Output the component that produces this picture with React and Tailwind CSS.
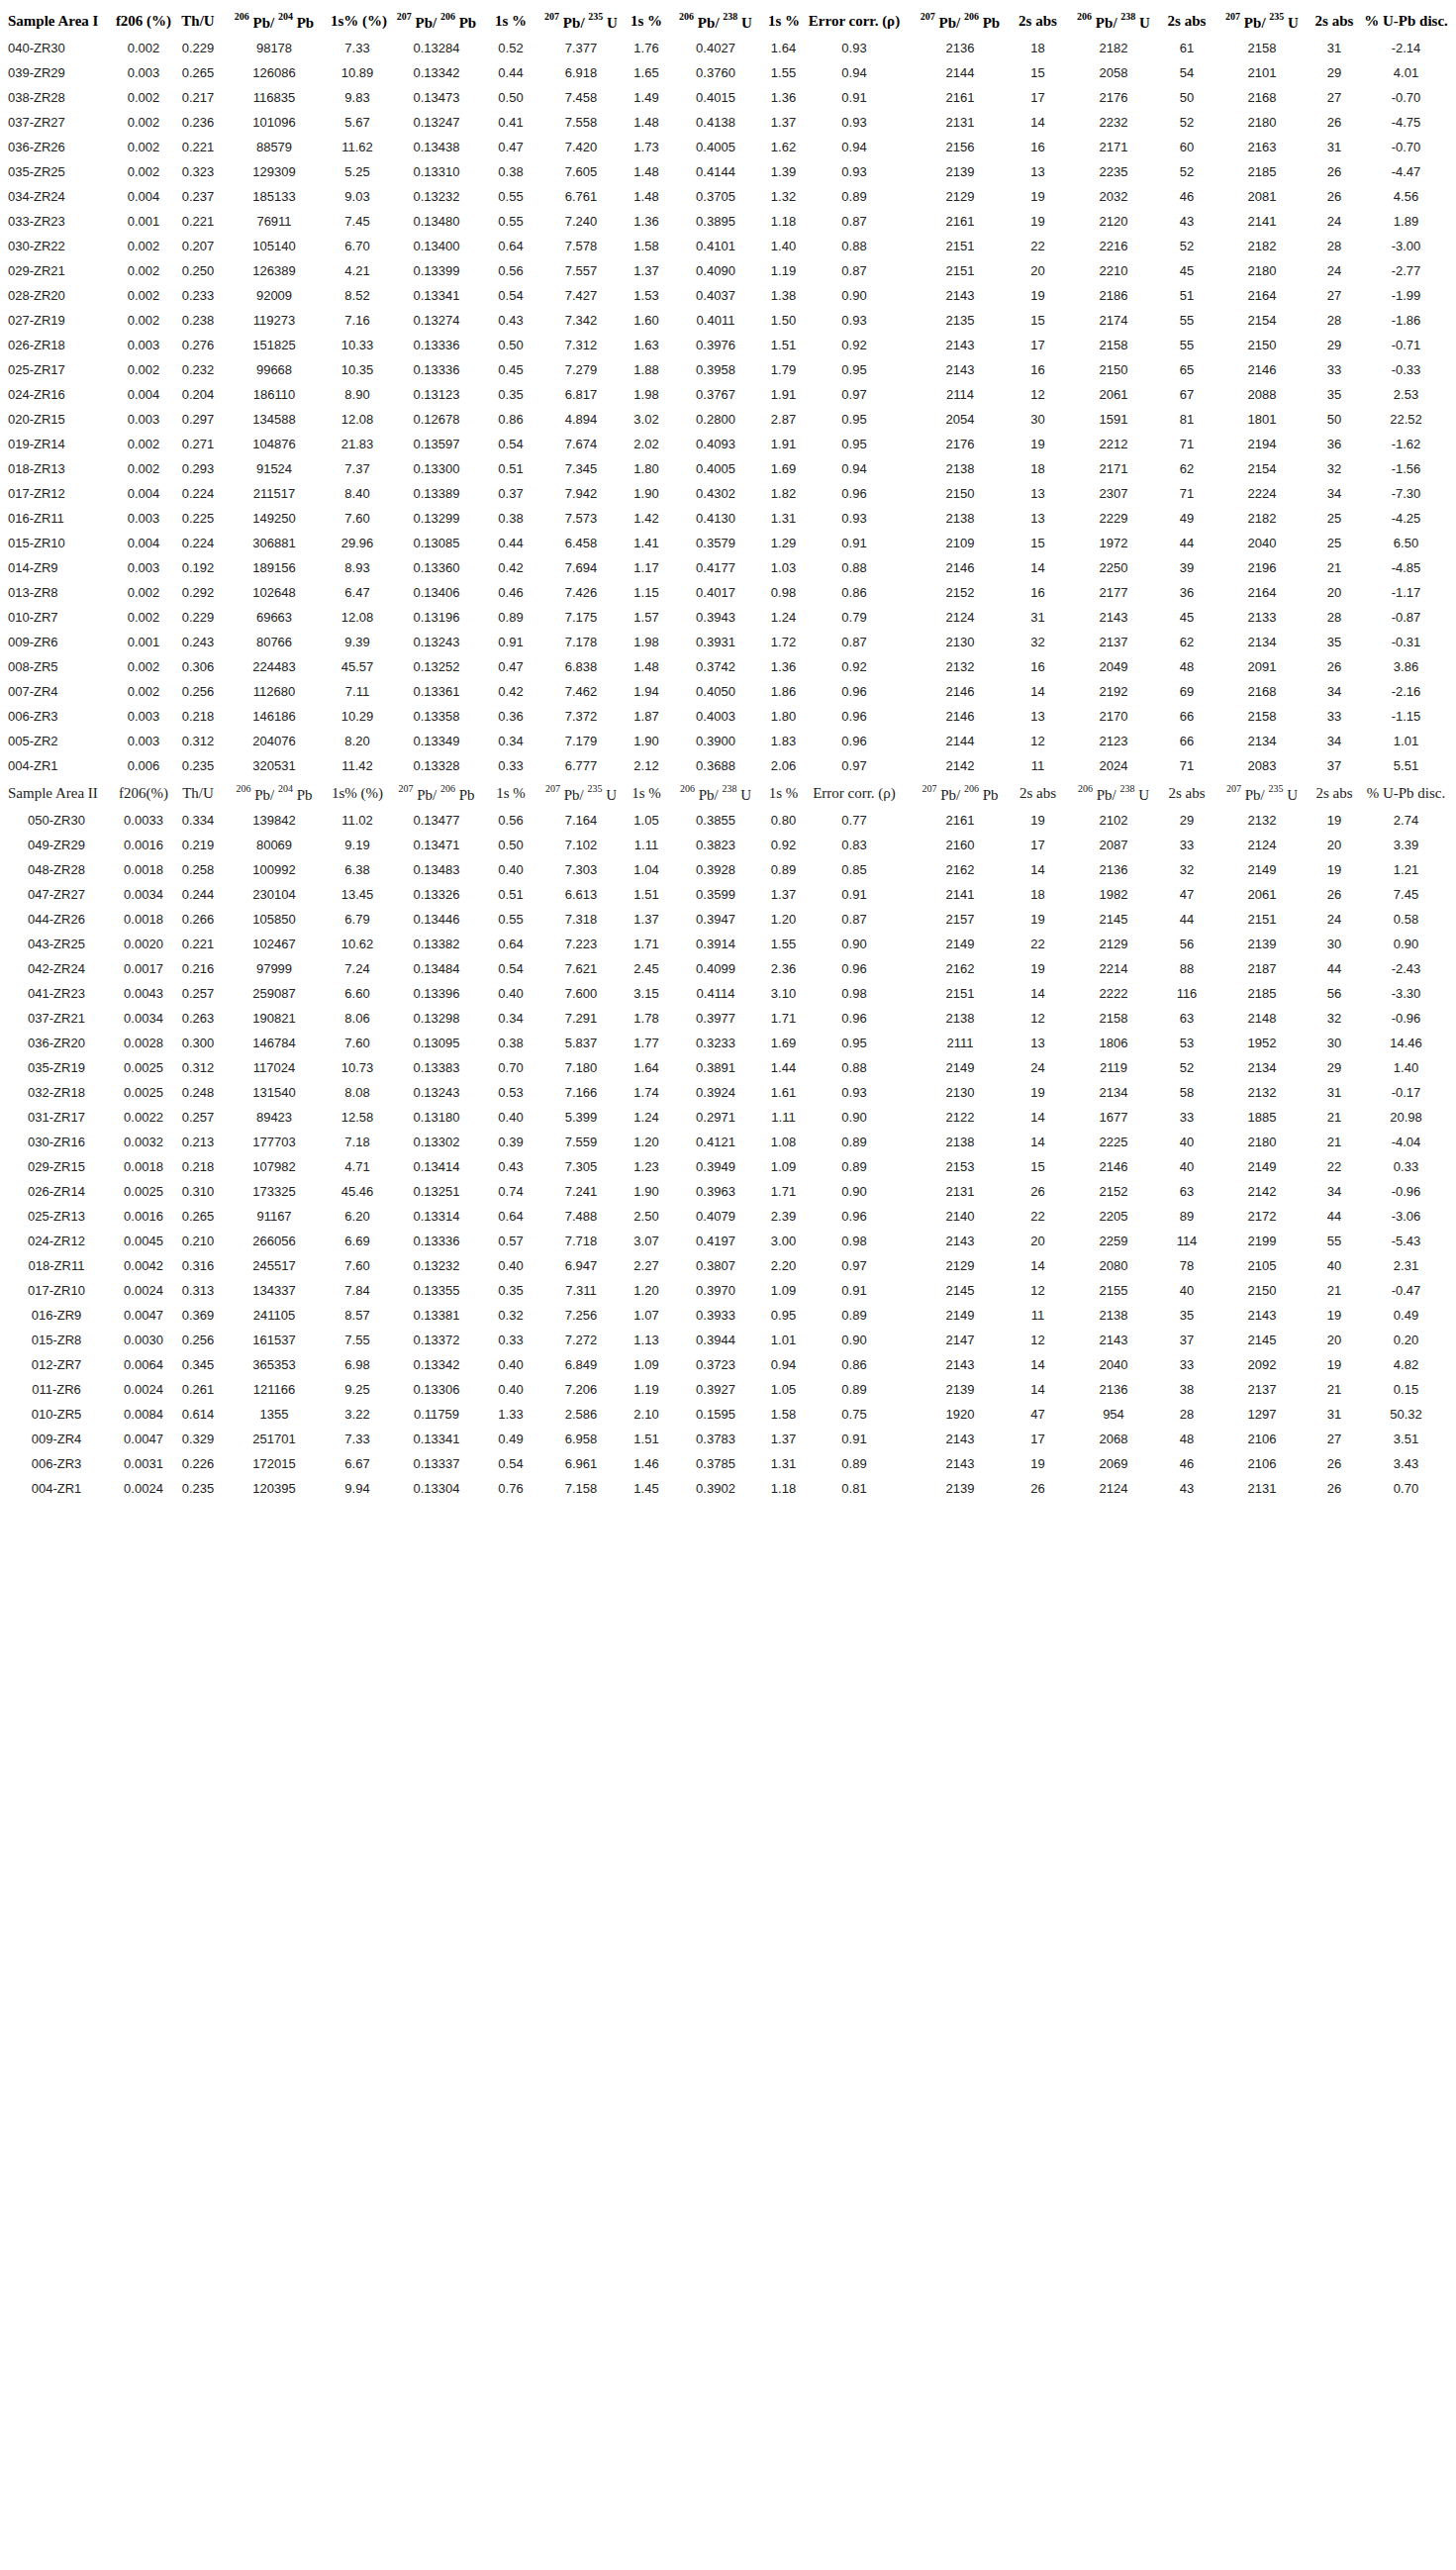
const areaOne = [
  ["040-ZR30", "0.002", "0.229", "98178", "7.33", "0.13284", "0.52", "7.377", "1.76", "0.4027", "1.64", "0.93", "2136", "18", "2182", "61", "2158", "31", "-2.14"],
  ["039-ZR29", "0.003", "0.265", "126086", "10.89", "0.13342", "0.44", "6.918", "1.65", "0.3760", "1.55", "0.94", "2144", "15", "2058", "54", "2101", "29", "4.01"],
  ["038-ZR28", "0.002", "0.217", "116835", "9.83", "0.13473", "0.50", "7.458", "1.49", "0.4015", "1.36", "0.91", "2161", "17", "2176", "50", "2168", "27", "-0.70"],
  ["037-ZR27", "0.002", "0.236", "101096", "5.67", "0.13247", "0.41", "7.558", "1.48", "0.4138", "1.37", "0.93", "2131", "14", "2232", "52", "2180", "26", "-4.75"],
  ["036-ZR26", "0.002", "0.221", "88579", "11.62", "0.13438", "0.47", "7.420", "1.73", "0.4005", "1.62", "0.94", "2156", "16", "2171", "60", "2163", "31", "-0.70"],
  ["035-ZR25", "0.002", "0.323", "129309", "5.25", "0.13310", "0.38", "7.605", "1.48", "0.4144", "1.39", "0.93", "2139", "13", "2235", "52", "2185", "26", "-4.47"],
  ["034-ZR24", "0.004", "0.237", "185133", "9.03", "0.13232", "0.55", "6.761", "1.48", "0.3705", "1.32", "0.89", "2129", "19", "2032", "46", "2081", "26", "4.56"],
  ["033-ZR23", "0.001", "0.221", "76911", "7.45", "0.13480", "0.55", "7.240", "1.36", "0.3895", "1.18", "0.87", "2161", "19", "2120", "43", "2141", "24", "1.89"],
  ["030-ZR22", "0.002", "0.207", "105140", "6.70", "0.13400", "0.64", "7.578", "1.58", "0.4101", "1.40", "0.88", "2151", "22", "2216", "52", "2182", "28", "-3.00"],
  ["029-ZR21", "0.002", "0.250", "126389", "4.21", "0.13399", "0.56", "7.557", "1.37", "0.4090", "1.19", "0.87", "2151", "20", "2210", "45", "2180", "24", "-2.77"],
  ["028-ZR20", "0.002", "0.233", "92009", "8.52", "0.13341", "0.54", "7.427", "1.53", "0.4037", "1.38", "0.90", "2143", "19", "2186", "51", "2164", "27", "-1.99"],
  ["027-ZR19", "0.002", "0.238", "119273", "7.16", "0.13274", "0.43", "7.342", "1.60", "0.4011", "1.50", "0.93", "2135", "15", "2174", "55", "2154", "28", "-1.86"],
  ["026-ZR18", "0.003", "0.276", "151825", "10.33", "0.13336", "0.50", "7.312", "1.63", "0.3976", "1.51", "0.92", "2143", "17", "2158", "55", "2150", "29", "-0.71"],
  ["025-ZR17", "0.002", "0.232", "99668", "10.35", "0.13336", "0.45", "7.279", "1.88", "0.3958", "1.79", "0.95", "2143", "16", "2150", "65", "2146", "33", "-0.33"],
  ["024-ZR16", "0.004", "0.204", "186110", "8.90", "0.13123", "0.35", "6.817", "1.98", "0.3767", "1.91", "0.97", "2114", "12", "2061", "67", "2088", "35", "2.53"],
  ["020-ZR15", "0.003", "0.297", "134588", "12.08", "0.12678", "0.86", "4.894", "3.02", "0.2800", "2.87", "0.95", "2054", "30", "1591", "81", "1801", "50", "22.52"],
  ["019-ZR14", "0.002", "0.271", "104876", "21.83", "0.13597", "0.54", "7.674", "2.02", "0.4093", "1.91", "0.95", "2176", "19", "2212", "71", "2194", "36", "-1.62"],
  ["018-ZR13", "0.002", "0.293", "91524", "7.37", "0.13300", "0.51", "7.345", "1.80", "0.4005", "1.69", "0.94", "2138", "18", "2171", "62", "2154", "32", "-1.56"],
  ["017-ZR12", "0.004", "0.224", "211517", "8.40", "0.13389", "0.37", "7.942", "1.90", "0.4302", "1.82", "0.96", "2150", "13", "2307", "71", "2224", "34", "-7.30"],
  ["016-ZR11", "0.003", "0.225", "149250", "7.60", "0.13299", "0.38", "7.573", "1.42", "0.4130", "1.31", "0.93", "2138", "13", "2229", "49", "2182", "25", "-4.25"],
  ["015-ZR10", "0.004", "0.224", "306881", "29.96", "0.13085", "0.44", "6.458", "1.41", "0.3579", "1.29", "0.91", "2109", "15", "1972", "44", "2040", "25", "6.50"],
  ["014-ZR9", "0.003", "0.192", "189156", "8.93", "0.13360", "0.42", "7.694", "1.17", "0.4177", "1.03", "0.88", "2146", "14", "2250", "39", "2196", "21", "-4.85"],
  ["013-ZR8", "0.002", "0.292", "102648", "6.47", "0.13406", "0.46", "7.426", "1.15", "0.4017", "0.98", "0.86", "2152", "16", "2177", "36", "2164", "20", "-1.17"],
  ["010-ZR7", "0.002", "0.229", "69663", "12.08", "0.13196", "0.89", "7.175", "1.57", "0.3943", "1.24", "0.79", "2124", "31", "2143", "45", "2133", "28", "-0.87"],
  ["009-ZR6", "0.001", "0.243", "80766", "9.39", "0.13243", "0.91", "7.178", "1.98", "0.3931", "1.72", "0.87", "2130", "32", "2137", "62", "2134", "35", "-0.31"],
  ["008-ZR5", "0.002", "0.306", "224483", "45.57", "0.13252", "0.47", "6.838", "1.48", "0.3742", "1.36", "0.92", "2132", "16", "2049", "48", "2091", "26", "3.86"],
  ["007-ZR4", "0.002", "0.256", "112680", "7.11", "0.13361", "0.42", "7.462", "1.94", "0.4050", "1.86", "0.96", "2146", "14", "2192", "69", "2168", "34", "-2.16"],
  ["006-ZR3", "0.003", "0.218", "146186", "10.29", "0.13358", "0.36", "7.372", "1.87", "0.4003", "1.80", "0.96", "2146", "13", "2170", "66", "2158", "33", "-1.15"],
  ["005-ZR2", "0.003", "0.312", "204076", "8.20", "0.13349", "0.34", "7.179", "1.90", "0.3900", "1.83", "0.96", "2144", "12", "2123", "66", "2134", "34", "1.01"],
  ["004-ZR1", "0.006", "0.235", "320531", "11.42", "0.13328", "0.33", "6.777", "2.12", "0.3688", "2.06", "0.97", "2142", "11", "2024", "71", "2083", "37", "5.51"],
];

const areaTwo = [
  ["050-ZR30", "0.0033", "0.334", "139842", "11.02", "0.13477", "0.56", "7.164", "1.05", "0.3855", "0.80", "0.77", "2161", "19", "2102", "29", "2132", "19", "2.74"],
  ["049-ZR29", "0.0016", "0.219", "80069", "9.19", "0.13471", "0.50", "7.102", "1.11", "0.3823", "0.92", "0.83", "2160", "17", "2087", "33", "2124", "20", "3.39"],
  ["048-ZR28", "0.0018", "0.258", "100992", "6.38", "0.13483", "0.40", "7.303", "1.04", "0.3928", "0.89", "0.85", "2162", "14", "2136", "32", "2149", "19", "1.21"],
  ["047-ZR27", "0.0034", "0.244", "230104", "13.45", "0.13326", "0.51", "6.613", "1.51", "0.3599", "1.37", "0.91", "2141", "18", "1982", "47", "2061", "26", "7.45"],
  ["044-ZR26", "0.0018", "0.266", "105850", "6.79", "0.13446", "0.55", "7.318", "1.37", "0.3947", "1.20", "0.87", "2157", "19", "2145", "44", "2151", "24", "0.58"],
  ["043-ZR25", "0.0020", "0.221", "102467", "10.62", "0.13382", "0.64", "7.223", "1.71", "0.3914", "1.55", "0.90", "2149", "22", "2129", "56", "2139", "30", "0.90"],
  ["042-ZR24", "0.0017", "0.216", "97999", "7.24", "0.13484", "0.54", "7.621", "2.45", "0.4099", "2.36", "0.96", "2162", "19", "2214", "88", "2187", "44", "-2.43"],
  ["041-ZR23", "0.0043", "0.257", "259087", "6.60", "0.13396", "0.40", "7.600", "3.15", "0.4114", "3.10", "0.98", "2151", "14", "2222", "116", "2185", "56", "-3.30"],
  ["037-ZR21", "0.0034", "0.263", "190821", "8.06", "0.13298", "0.34", "7.291", "1.78", "0.3977", "1.71", "0.96", "2138", "12", "2158", "63", "2148", "32", "-0.96"],
  ["036-ZR20", "0.0028", "0.300", "146784", "7.60", "0.13095", "0.38", "5.837", "1.77", "0.3233", "1.69", "0.95", "2111", "13", "1806", "53", "1952", "30", "14.46"],
  ["035-ZR19", "0.0025", "0.312", "117024", "10.73", "0.13383", "0.70", "7.180", "1.64", "0.3891", "1.44", "0.88", "2149", "24", "2119", "52", "2134", "29", "1.40"],
  ["032-ZR18", "0.0025", "0.248", "131540", "8.08", "0.13243", "0.53", "7.166", "1.74", "0.3924", "1.61", "0.93", "2130", "19", "2134", "58", "2132", "31", "-0.17"],
  ["031-ZR17", "0.0022", "0.257", "89423", "12.58", "0.13180", "0.40", "5.399", "1.24", "0.2971", "1.11", "0.90", "2122", "14", "1677", "33", "1885", "21", "20.98"],
  ["030-ZR16", "0.0032", "0.213", "177703", "7.18", "0.13302", "0.39", "7.559", "1.20", "0.4121", "1.08", "0.89", "2138", "14", "2225", "40", "2180", "21", "-4.04"],
  ["029-ZR15", "0.0018", "0.218", "107982", "4.71", "0.13414", "0.43", "7.305", "1.23", "0.3949", "1.09", "0.89", "2153", "15", "2146", "40", "2149", "22", "0.33"],
  ["026-ZR14", "0.0025", "0.310", "173325", "45.46", "0.13251", "0.74", "7.241", "1.90", "0.3963", "1.71", "0.90", "2131", "26", "2152", "63", "2142", "34", "-0.96"],
  ["025-ZR13", "0.0016", "0.265", "91167", "6.20", "0.13314", "0.64", "7.488", "2.50", "0.4079", "2.39", "0.96", "2140", "22", "2205", "89", "2172", "44", "-3.06"],
  ["024-ZR12", "0.0045", "0.210", "266056", "6.69", "0.13336", "0.57", "7.718", "3.07", "0.4197", "3.00", "0.98", "2143", "20", "2259", "114", "2199", "55", "-5.43"],
  ["018-ZR11", "0.0042", "0.316", "245517", "7.60", "0.13232", "0.40", "6.947", "2.27", "0.3807", "2.20", "0.97", "2129", "14", "2080", "78", "2105", "40", "2.31"],
  ["017-ZR10", "0.0024", "0.313", "134337", "7.84", "0.13355", "0.35", "7.311", "1.20", "0.3970", "1.09", "0.91", "2145", "12", "2155", "40", "2150", "21", "-0.47"],
  ["016-ZR9", "0.0047", "0.369", "241105", "8.57", "0.13381", "0.32", "7.256", "1.07", "0.3933", "0.95", "0.89", "2149", "11", "2138", "35", "2143", "19", "0.49"],
  ["015-ZR8", "0.0030", "0.256", "161537", "7.55", "0.13372", "0.33", "7.272", "1.13", "0.3944", "1.01", "0.90", "2147", "12", "2143", "37", "2145", "20", "0.20"],
  ["012-ZR7", "0.0064", "0.345", "365353", "6.98", "0.13342", "0.40", "6.849", "1.09", "0.3723", "0.94", "0.86", "2143", "14", "2040", "33", "2092", "19", "4.82"],
  ["011-ZR6", "0.0024", "0.261", "121166", "9.25", "0.13306", "0.40", "7.206", "1.19", "0.3927", "1.05", "0.89", "2139", "14", "2136", "38", "2137", "21", "0.15"],
  ["010-ZR5", "0.0084", "0.614", "1355", "3.22", "0.11759", "1.33", "2.586", "2.10", "0.1595", "1.58", "0.75", "1920", "47", "954", "28", "1297", "31", "50.32"],
  ["009-ZR4", "0.0047", "0.329", "251701", "7.33", "0.13341", "0.49", "6.958", "1.51", "0.3783", "1.37", "0.91", "2143", "17", "2068", "48", "2106", "27", "3.51"],
  ["006-ZR3", "0.0031", "0.226", "172015", "6.67", "0.13337", "0.54", "6.961", "1.46", "0.3785", "1.31", "0.89", "2143", "19", "2069", "46", "2106", "26", "3.43"],
  ["004-ZR1", "0.0024", "0.235", "120395", "9.94", "0.13304", "0.76", "7.158", "1.45", "0.3902", "1.18", "0.81", "2139", "26", "2124", "43", "2131", "26", "0.70"],
];

// 19 fixed columns, matched to the source table
const cols =
  "grid grid-cols-[106px_70px_40px_114px_54px_106px_44px_98px_34px_106px_31px_112px_102px_55px_98px_50px_102px_44px_101px] items-center";

function Ratio({ top, topEl, bottom, bottomEl }) {
  return (
    <span className="whitespace-nowrap">
      <span className="align-[6px] text-[10px]">{top}</span>{" "}
      <span className="align-[-2px]">{topEl}/</span>{" "}
      <span className="align-[6px] text-[10px]">{bottom}</span>{" "}
      <span className="align-[-2px]">{bottomEl}</span>
    </span>
  );
}

function HeaderRow({ area, f206 }) {
  const cells = [
    f206,
    "Th/U",
    <Ratio top="206" topEl="Pb" bottom="204" bottomEl="Pb" />,
    "1s% (%)",
    <Ratio top="207" topEl="Pb" bottom="206" bottomEl="Pb" />,
    "1s %",
    <Ratio top="207" topEl="Pb" bottom="235" bottomEl="U" />,
    "1s %",
    <Ratio top="206" topEl="Pb" bottom="238" bottomEl="U" />,
    "1s %",
    "Error corr. (ρ)",
    <Ratio top="207" topEl="Pb" bottom="206" bottomEl="Pb" />,
    "2s abs",
    <Ratio top="206" topEl="Pb" bottom="238" bottomEl="U" />,
    "2s abs",
    <Ratio top="207" topEl="Pb" bottom="235" bottomEl="U" />,
    "2s abs",
    "% U-Pb disc.",
  ];
  return (
    <div className={`${cols} h-[30px]`}>
      <div className="pl-1 whitespace-nowrap">{area}</div>
      {cells.map((c, i) => (
        <div key={i} className="text-center whitespace-nowrap">
          {c}
        </div>
      ))}
    </div>
  );
}

function DataRow({ row, centerName }) {
  return (
    <div className={`${cols} h-[25px]`}>
      {row.map((v, i) => (
        <div
          key={i}
          className={`whitespace-nowrap ${i === 0 && !centerName ? "pl-1 text-left" : "text-center"}`}
        >
          {v}
        </div>
      ))}
    </div>
  );
}

export default function App() {
  return (
    <div className="min-h-[2596px] bg-white pl-1 pt-[6px] text-black">
      <div className="font-['Liberation_Serif',serif] text-[15px] font-bold leading-none">
        <HeaderRow area="Sample Area I" f206="f206 (%)" />
      </div>
      <div className="font-['Liberation_Sans',Arial,sans-serif] text-[13px] leading-none text-[#222]">
        {areaOne.map((r) => (
          <DataRow key={r[0]} row={r} />
        ))}
      </div>
      <div className="font-['Liberation_Serif',serif] text-[15px] leading-none text-[#222]">
        <HeaderRow area="Sample Area II" f206="f206(%)" />
      </div>
      <div className="font-['Liberation_Sans',Arial,sans-serif] text-[13px] leading-none text-[#222]">
        {areaTwo.map((r) => (
          <DataRow key={r[0]} row={r} centerName />
        ))}
      </div>
    </div>
  );
}
